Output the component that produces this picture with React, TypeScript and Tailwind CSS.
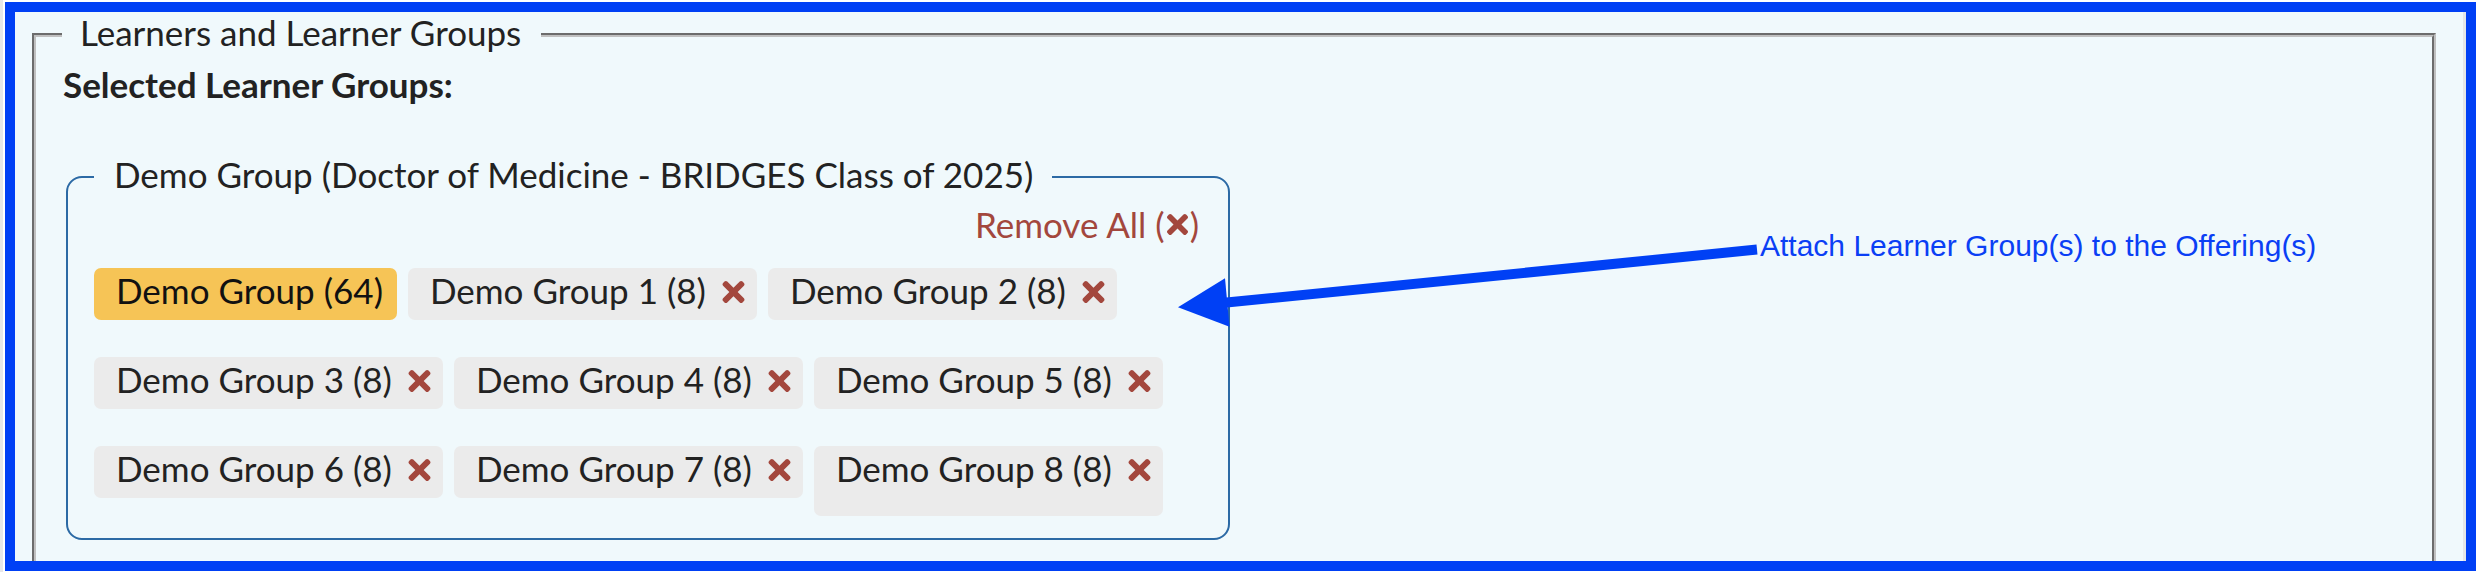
import React from "react";

function TimesIcon({ className }: { className?: string }) {
  return (
    <svg viewBox="0 80 352 352" className={className} aria-hidden="true">
      <path
        fill="currentColor"
        d="M242.72 256l100.07-100.07c12.28-12.28 12.28-32.19 0-44.48l-22.24-22.24c-12.28-12.28-32.19-12.28-44.48 0L176 189.28 75.93 89.21c-12.28-12.28-32.19-12.28-44.48 0L9.21 111.45c-12.28 12.28-12.28 32.19 0 44.48L109.28 256 9.21 356.07c-12.28 12.28-12.28 32.19 0 44.48l22.24 22.240c12.28 12.28 32.2 12.28 44.48 0L176 322.72l100.07 100.07c12.28 12.28 32.2 12.28 44.48 0l22.24-22.24c12.28-12.28 12.28-32.19 0-44.48L242.72 256z"
      />
    </svg>
  );
}

type Group = { label: string; primary?: boolean; tall?: boolean };

const groups: Group[] = [
  { label: "Demo Group (64)", primary: true },
  { label: "Demo Group 1 (8)" },
  { label: "Demo Group 2 (8)" },
  { label: "Demo Group 3 (8)" },
  { label: "Demo Group 4 (8)" },
  { label: "Demo Group 5 (8)" },
  { label: "Demo Group 6 (8)" },
  { label: "Demo Group 7 (8)" },
  { label: "Demo Group 8 (8)", tall: true },
];

function Chip({ g }: { g: Group }) {
  if (g.primary) {
    return (
      <div className="flex items-start rounded-[7px] bg-[#f6c456] pl-[22px] pr-[14px] pt-[2px] pb-[10px] text-[#111]">
        <span className="whitespace-nowrap leading-[40px]">{g.label}</span>
      </div>
    );
  }
  return (
    <div
      className={
        g.tall
          ? "flex items-start rounded-[7px] bg-[#ebebeb] pl-[22px] pr-[12px] pt-[2px] pb-[28px] text-[#222]"
          : "flex items-start rounded-[7px] bg-[#ebebeb] pl-[22px] pr-[12px] pt-[2px] pb-[10px] text-[#222]"
      }
    >
      <span className="whitespace-nowrap leading-[40px]">{g.label}</span>
      <TimesIcon className="ml-[16px] mt-[11px] h-[22px] w-[23px] text-[#a3473d]" />
    </div>
  );
}

export default function App() {
  return (
    <div className="relative flex h-[572px] w-[2478px] overflow-hidden bg-white font-[Lato,sans-serif] text-[35px] text-[#222]">
      <div className="h-full w-[3px] bg-[#e7e7e7]" />
      <div className="ml-[2px] mt-[2px] h-[569px] w-[2471px] overflow-hidden border-[10px] border-[#0040f5] bg-[#f0f9fc]">
        <div className="h-full border-r-[3px] border-[#e4e6e7]">
          <fieldset className="ml-[17px] w-[2404px] border-[4px] border-[#c0c0c0] pl-[26px] pt-[6px] pb-[80px] [border-style:groove]">
            <legend className="pl-[18px] pr-[20px] pb-[6px] leading-[40px] text-[#222]">
              Learners and Learner Groups
            </legend>
            <div className="ml-[1px] font-bold leading-[40px] text-[#222]">
              Selected Learner Groups:
            </div>
            <fieldset className="ml-[4px] mt-[50px] w-[1164px] rounded-[16px] border-2 border-[#2c6aa5] pl-[26px] pr-[29px] pt-[4px] pb-[22px]">
              <legend className="pl-[20px] pr-[19px] pb-[6px] leading-[40px] text-[#222]">
                Demo Group (Doctor of Medicine - BRIDGES Class of 2025)
              </legend>
              <div className="flex items-start justify-end text-[#a3473d]">
                <span className="leading-[40px]">Remove All (</span>
                <TimesIcon className="ml-[1px] mr-[1px] mt-[10px] h-[21px] w-[23px]" />
                <span className="leading-[40px]">)</span>
              </div>
              <div className="mt-[24px] flex flex-wrap items-start gap-x-[11px] gap-y-[37px]">
                {groups.map((g) => (
                  <Chip key={g.label} g={g} />
                ))}
              </div>
            </fieldset>
          </fieldset>
        </div>
      </div>

      <svg
        className="pointer-events-none absolute left-0 top-0"
        width={2478}
        height={572}
        viewBox="0 0 2478 572"
      >
        <line x1={1757} y1={249.6} x2={1224} y2={302.8} stroke="#0040f5" strokeWidth={10} />
        <polygon points="1178,307.3 1225,278.3 1229.5,326.7" fill="#0040f5" />
      </svg>
      <div className="absolute left-[1760px] top-[229px] whitespace-nowrap font-['Liberation_Sans',Arial,sans-serif] text-[30px] leading-[34px] text-[#0b3ff5]">
        Attach Learner Group(s) to the Offering(s)
      </div>
    </div>
  );
}
